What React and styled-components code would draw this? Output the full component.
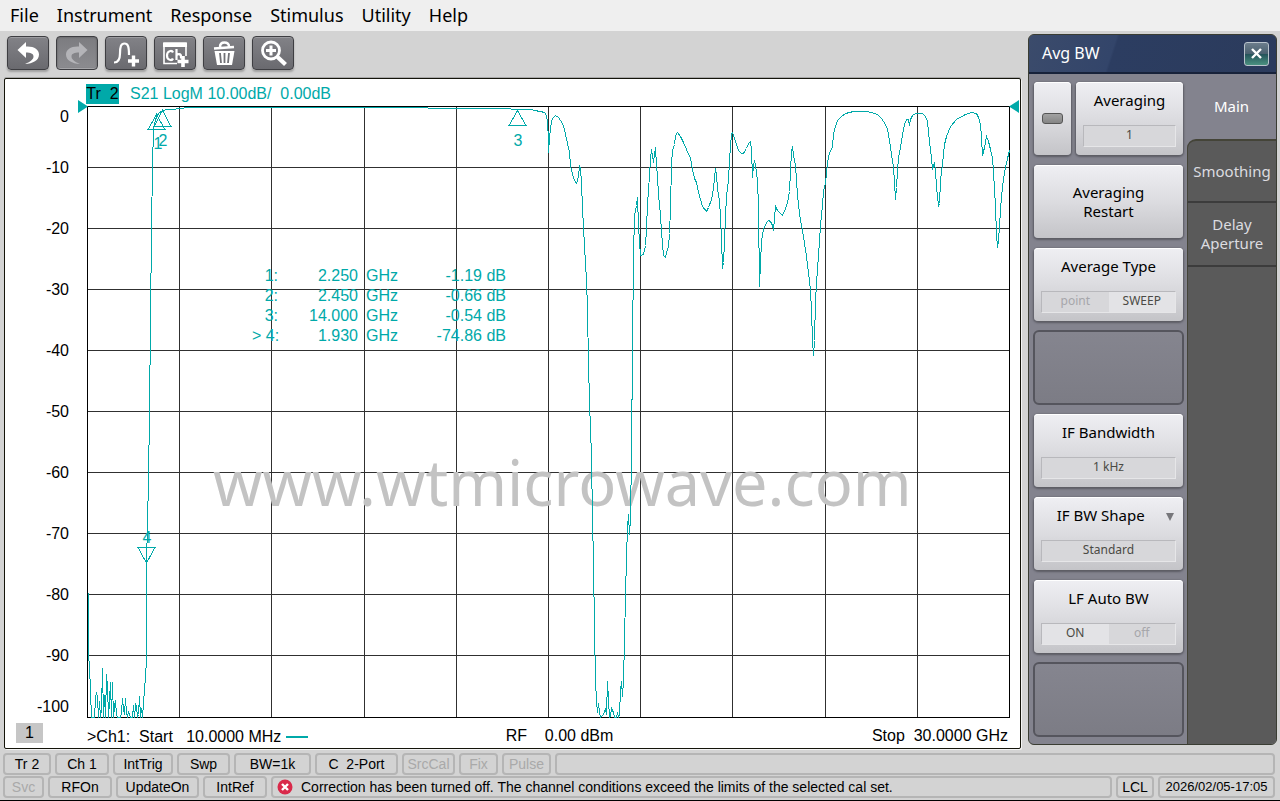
import React from "react";
import styled, { createGlobalStyle, css } from "styled-components";

const ui = `"Noto Sans", "Open Sans", sans-serif`;
const plain = `"Liberation Sans", Arial, sans-serif`;
const teal = "#00a9a9";

const GlobalStyle = createGlobalStyle`
  *, *::before, *::after { box-sizing: border-box; }
  body { margin: 0; background: #d3d3d3; font-family: ${plain}; color: #000; }
  button { font: inherit; color: inherit; margin: 0; padding: 0; border: 0; background: none; cursor: pointer; }
`;

const Page = styled.div`
  display: flex;
  flex-direction: column;
  min-height: 100vh;
  border-bottom: 1px solid #000;
`;

/* ---- menu ---- */
const MenuBar = styled.nav`
  display: flex;
  align-items: center;
  gap: 18px;
  height: 31px;
  padding: 0 10px 2px;
  background: #efefef;
`;
const MenuItem = styled.button`
  font-family: ${ui};
  font-size: 18px;
  line-height: 24px;
`;

/* ---- main area ---- */
const Main = styled.main`
  flex: 1;
  display: flex;
  gap: 7px;
  padding: 0 3px 2px 4px;
`;
const Workspace = styled.section`
  flex: 1;
  min-width: 0;
  display: flex;
  flex-direction: column;
`;
const Toolbar = styled.div`
  display: flex;
  gap: 7px;
  padding: 5px 3px 8px;
`;
const Tool = styled.button`
  width: 42px;
  height: 34px;
  display: grid;
  place-items: center;
  border: 1px solid #3e3e42;
  border-radius: 4px;
  color: #fff;
  background: linear-gradient(#828287, #6a6a6f);
  box-shadow: inset 0 1px 0 #9c9ca0, 0 2px 2px #a0a0a0;
  &:disabled {
    color: #b4b4b8;
    background: linear-gradient(#7c7c80, #8c8c90);
    box-shadow: inset 0 0 2px #555, inset 0 -1px 0 #c4c4c8;
  }
  svg { display: block; }
`;

const ChartWindow = styled.div`
  flex: 1;
  display: grid;
  grid-template-columns: 82px minmax(0, 1fr) 10px;
  grid-template-rows: 27px minmax(400px, 1fr) 30px;
  border: 1px solid #14140a;
  border-radius: 2px;
  background: #fff;
  box-shadow: 0 -1px 0 #a8a8a8, 1px 1px 0 #f4f4f4;
  font-size: 16px;
  line-height: 20px;
`;
const TraceHeader = styled.div`
  grid-column: 2;
  display: flex;
  align-items: center;
  gap: 11px;
  padding-top: 3px;
  color: ${teal};
  white-space: pre;
`;
const TraceBadge = styled.span`
  margin-left: -1px;
  width: 33px;
  text-align: center;
  background: ${teal};
  color: #000;
`;
const Scale = styled.div`
  grid-row: 2;
  grid-column: 1;
  display: grid;
  grid-template-rows: 1fr repeat(9, 2fr) 1fr;
  padding: 1px 18px 1px 0;
  text-align: right;
`;
const ScaleLabel = styled.span`
  align-self: ${(p) => p.$align || "center"};
`;
const Plot = styled.div`
  grid-row: 2;
  grid-column: 2;
  position: relative;
  color: ${teal};
`;
const Layer = styled.svg`
  position: absolute;
  inset: 0;
  width: 100%;
  height: 100%;
  overflow: visible;
  path, polyline, polygon { vector-effect: non-scaling-stroke; }
`;
const Watermark = styled.div`
  position: absolute;
  top: 61.5%;
  left: 51.5%;
  transform: translate(-50%, -50%);
  font-family: ${ui};
  font-size: 63px;
  line-height: 80px;
  color: #c3c3c3;
`;
const MarkerLabel = styled.span`
  position: absolute;
  left: ${(p) => p.$x}%;
  top: ${(p) => p.$y}%;
  transform: translate(-50%, -50%);
`;
const Readout = styled.table`
  position: absolute;
  left: 165px;
  top: 160px;
  width: 254px;
  border-collapse: collapse;
  table-layout: fixed;
  td, th { padding: 0; height: 20px; font-weight: 400; text-align: right; white-space: pre; }
  col:nth-child(1) { width: 26px; }
  col:nth-child(2) { width: 80px; }
  col:nth-child(3) { width: 40px; }
`;
const WindowNumber = styled.div`
  grid-row: 3;
  grid-column: 1;
  width: 27px;
  margin: 5px 0 0 11px;
  height: 20px;
  text-align: center;
  background: #c6c6c6;
`;
const Sweep = styled.div`
  grid-row: 3;
  grid-column: 2;
  display: grid;
  grid-template-columns: 1fr auto 1fr;
  padding: 8px 2px 0 0;
  white-space: pre;
  & > :nth-child(2) { padding-left: 24px; }
  & > :nth-child(3) { text-align: right; }
`;
const StartText = styled.span`
  display: flex;
  align-items: center;
  gap: 5px;
  &::after { content: ""; width: 22px; height: 2px; background: ${teal}; }
`;

/* ---- side panel ---- */
const Panel = styled.aside`
  flex: 0 0 249px;
  display: flex;
  flex-direction: column;
  margin: 3px 0 4px;
  border: 1px solid #3a3d33;
  border-radius: 6px;
  overflow: hidden;
  background: #5a5a5a;
  font-family: ${ui};
  font-size: 15px;
  line-height: 19px;
`;
const PanelHeader = styled.header`
  height: 39px;
  display: flex;
  align-items: center;
  justify-content: space-between;
  padding: 0 7px 0 13px;
  border-bottom: 2px solid #17223a;
  color: #fff;
  background: linear-gradient(108deg, #3b4b6b 0%, #33456a 34%, #2c3d61 35%, #2b3b5c 100%);
`;
const PanelTitle = styled.h2`
  margin: 0;
  font-size: 16px;
  font-weight: 400;
`;
const Close = styled.button`
  width: 25px;
  height: 24px;
  display: grid;
  place-items: center;
  border: 1px solid #b9c3cc;
  border-radius: 3px;
  background: linear-gradient(#6c7d8c 0%, #4b6170 48%, #24525a 50%, #4a9180 100%);
`;
const PanelBody = styled.div`
  flex: 1;
  display: flex;
  background: #83838e;
`;
const Keys = styled.div`
  flex: 1;
  display: grid;
  grid-template-rows: repeat(8, minmax(66px, 1fr));
  gap: 10px;
  padding: 8px 4px 8px 5px;
`;
const KeyPair = styled.div`
  display: grid;
  grid-template-columns: 37px 1fr;
  gap: 5px;
`;
const Key = styled.button`
  position: relative;
  display: flex;
  flex-direction: column;
  align-items: center;
  justify-content: ${(p) => (p.$centred ? "center" : "space-between")};
  padding: ${(p) => (p.$centred ? "0" : "9px 7px 8px")};
  border-radius: 4px;
  background: linear-gradient(#efeff3, #dcdce0 50%, #c4c4c8);
  box-shadow: inset 0 1px 0 #fff, 0 1px 2px 1px #5c5c64;
`;
const EmptyKey = styled.div`
  margin: -1px;
  border: 2px solid #55555d;
  border-radius: 6px;
  background: linear-gradient(#85858f, #7c7c85);
`;
const Lamp = styled.span`
  width: 21px;
  height: 11px;
  border: 1px solid #555;
  border-radius: 3px;
  background: linear-gradient(#a2a2a2, #858585);
`;
const Field = styled.span`
  display: flex;
  width: 100%;
  height: 22px;
  border: 1px solid;
  border-color: #b8b8bc #e6e6e8 #e6e6e8 #b8b8bc;
  background: #d7d7da;
  font-size: 12px;
  line-height: 18px;
  color: #4a4a44;
`;
const Choice = styled.span`
  flex: 1;
  text-align: center;
  ${(p) => p.$on && css`background: #e3e3e6;`}
  ${(p) => p.$off && css`color: #a6a6aa;`}
`;
const Caret = styled.span`
  position: absolute;
  right: 9px;
  top: 16px;
  border: 4px solid transparent;
  border-top: 8px solid #77777b;
  border-bottom: 0;
`;
const Tabs = styled.div`
  flex: 0 0 89px;
  display: flex;
  flex-direction: column;
`;
const Tab = styled.button`
  height: 64px;
  color: #dcdce0;
  background: #5a5a5a;
  border-left: 1px solid #444438;
  border-bottom: 2px solid #3c3c3c;
  ${(p) => p.$active && css`
    height: 65px;
    color: #fff;
    background: none;
    border: 0;
  `}
  ${(p) => p.$first && css`
    border-top: 2px solid #444438;
    border-top-left-radius: 9px;
  `}
`;
const TabFill = styled.div`
  flex: 1;
  border-left: 1px solid #444438;
  background: #5a5a5a;
`;

/* ---- status bar ---- */
const Status = styled.footer`
  display: flex;
  flex-direction: column;
  gap: 1px;
  padding: 2px 5px 2px 3px;
  font-size: 14px;
  line-height: 18px;
`;
const StatusRow = styled.div`
  display: flex;
  gap: 4px;
`;
const Cell = styled.div`
  height: 22px;
  flex: ${(p) => (p.$w ? `0 0 ${p.$w}px` : "1")};
  min-width: 0;
  display: flex;
  align-items: center;
  justify-content: ${(p) => (p.$w ? "center" : "flex-start")};
  gap: 8px;
  padding: 0 ${(p) => (p.$w ? 0 : 4)}px;
  border: 2px solid #b5b5b5;
  border-radius: 4px;
  white-space: pre;
  font-size: ${(p) => (p.$small ? 13 : 14)}px;
  color: ${(p) => (p.$dim ? "#a9a9a9" : "#000")};
`;

const W = 923;
const H = 612;
const OX = 87;
const OY = 106;

const trace = `88,592 88,655 89,665 90,692 91,717 94,717 95,698 96,692 97,697 98,717 99,701 100,717 101,709 102,668
103,717 104,695 105,717 106,674 107,686 108,717 109,700 110,682 111,717 112,682 113,717 114,706 115,700 116,714 117,717 120,717
121,712 122,698 123,708 124,714 125,698 126,712 127,717 128,711 130,717 132,717 133,705 134,717 135,704 136,706 137,717 138,714 139,696
140,717 141,708 142,717 143,702 144,690 145,676 146,660 146,564 148,480 149,412 150,320 151,228 152,167 153,128 155,119 158,113 162,110
168,109 183,108 184,107 427,107 428,108 510,108 511,109 531,109 534,110 540,111 544,112 546,115 547,122 548,138 548,152 549,137 551,121 552,118
555,115 558,117 560,120 563,125 565,134 567,143 569,152 570,165 572,174 574,180 576,183 578,176 579,165 580,168 581,182 582,208
583,226 584,246 585,262 586,280 587,309 588,364 589,400 590,430 591,455 592,520 593,560 594,630 595,680 596,700 597,712 598,703
599,711 600,717 601,716 603,714 605,708 606,714 607,681 608,700 609,717 610,716 611,708 613,712 614,717 616,717 617,712 618,717
619,713 620,690 621,681 622,696 623,680 624,640 625,596 626,556 627,528 628,514 629,534 630,517 631,455 632,346 633,256 634,215
636,205 637,197 638,225 639,242 640,255 643,254 645,245 646,228 647,204 649,175 650,158 651,149 652,155 653,162 654,154 655,147 656,165
657,176 658,194 660,215 661,231 662,243 663,255 665,257 666,252 668,246 669,233 670,208 671,164 672,150 674,144 675,135 677,132
680,136 683,142 686,149 690,158 692,169 694,178 696,182 698,192 700,199 702,206 706,211 708,207 711,199 713,188 714,177 715,168
716,175 717,188 719,200 720,216 721,239 722,268 723,262 724,241 725,215 726,196 728,180 729,160 730,146 731,133 732,132 734,138
736,144 738,150 741,153 743,153 746,148 748,143 750,141 751,150 752,177 753,165 754,160 755,164 757,180 758,207 759,286 760,262
761,241 763,229 766,222 768,220 770,221 772,225 773,230 774,217 775,206 777,210 782,215 785,208 787,202 789,191 790,170 791,152
792,146 793,155 795,165 796,180 797,194 798,205 800,220 802,230 804,243 806,256 808,272 810,290 811,310 812,340 813,355 814,340
815,300 816,283 818,255 820,225 822,205 823,190 825,183 826,172 828,156 830,150 832,147 833,133 835,126 837,120 841,116 845,113
853,111 866,111 871,112 877,114 881,118 885,124 887,129 889,140 891,154 893,167 894,182 895,199 896,187 897,170 898,157 900,147
902,134 904,124 906,119 908,119 909,125 910,119 912,115 915,113 922,113 925,116 927,121 929,141 931,158 932,169 934,162 935,170
936,187 938,205 939,203 940,180 942,163 944,144 946,136 950,126 956,119 965,114 971,112 976,113 978,117 980,124 981,137 982,155
984,147 986,136 988,141 990,149 992,157 993,172 994,188 995,207 996,233 997,247 998,240 999,225 1000,210 1001,196 1003,178 1005,167
1007,158 1009,150`
  .trim()
  .split(/\s+/)
  .map((pair) => {
    const [x, y] = pair.split(",").map(Number);
    return `${x - OX + 0.5},${y - OY + 0.5}`;
  })
  .join(" ");

const gridX = [92, 184, 277, 369, 461, 553, 645, 738, 830];
const gridY = [61, 122, 183, 244, 305, 366, 427, 488, 549];

const grid = gridX.map((x) => `M${x}.5 0V${H}`).join("") + gridY.map((y) => `M0 ${y}.5H${W}`).join("");

const scale = [0, -10, -20, -30, -40, -50, -60, -70, -80, -90, -100];

const markers = [
  { n: 1, x: 71, y: 38 },
  { n: 2, x: 76, y: 35 },
  { n: 3, x: 431, y: 35 },
  { n: 4, x: 60, y: 432 },
];

const readings = [
  ["1:", "2.250", "-1.19 dB"],
  ["2:", "2.450", "-0.66 dB"],
  ["3:", "14.000", "-0.54 dB"],
  ["> 4:", "1.930", "-74.86 dB"],
];

const icons = {
  Undo: (
    <svg width="26" height="26" viewBox="0 0 26 26" fill="currentColor">
      <path d="M2.500 10 11 2v4.500c8-.5 13 3 13 8 0 6-6 9-14 9.500 6-2.500 8.500-5 8.500-7.500 0-3-3-4-7.500-4V18z" />
    </svg>
  ),
  Redo: (
    <svg width="26" height="26" viewBox="0 0 26 26" fill="currentColor">
      <path d="M23.500 10 15 2v4.500C7 6 2 9.500 2 14.500c0 6 6 9 14 9.500-6-2.500-8.500-5-8.500-7.500 0-3 3-4 7.500-4V18z" />
    </svg>
  ),
  "Add trace": (
    <svg width="30" height="28" viewBox="0 0 30 28" fill="none" stroke="currentColor">
      <path d="M3 23.500c4 0 6-3 6-9 0-7 1-10 4.500-10S18 7.500 18 16" strokeWidth="2.200" />
      <path d="M22.500 16.500v11M17 22h11" strokeWidth="3.400" />
    </svg>
  ),
  "Add channel": (
    <svg width="30" height="28" viewBox="0 0 30 28" fill="none" stroke="currentColor">
      <path d="M17 24.500H4V4h22v13" strokeWidth="1.600" />
      <path d="M3 6h24" strokeWidth="4" />
      <path d="M13 13.500c-1-2.500-6-2-6 3s5 5.500 6 3M16.500 10v11M16.500 16.500c1-2 4.500-2 4.500 1v2" strokeWidth="2.200" />
      <path d="M23 17v11M17.500 22.500h11" strokeWidth="3.600" />
    </svg>
  ),
  Delete: (
    <svg width="26" height="28" viewBox="0 0 26 28" fill="none" stroke="currentColor">
      <path d="M3 9.500 23 8M9 8c0-3 2-4.500 4.500-4.500S18 5 18 7.500" strokeWidth="2.500" />
      <path d="M3.500 12h20l-2.500 14H6z" fill="currentColor" stroke="none" />
      <path d="m9 14 1 10M13.500 14v10M18 14l-1 10" stroke="#707075" strokeWidth="1.800" />
    </svg>
  ),
  Zoom: (
    <svg width="28" height="28" viewBox="0 0 28 28" fill="none" stroke="currentColor">
      <circle cx="12" cy="11.500" r="8.500" strokeWidth="2.800" />
      <path d="M12 6.500v10M7 11.500h10" strokeWidth="3" />
      <path d="m18.500 18 8 7.500" strokeWidth="4.200" />
    </svg>
  ),
};

function Chart() {
  return (
    <ChartWindow>
      <TraceHeader>
        <TraceBadge>Tr  2</TraceBadge>
        <span>S21 LogM 10.00dB/  0.00dB</span>
      </TraceHeader>
      <Scale>
        {scale.map((v) => (
          <ScaleLabel key={v} $align={v === 0 ? "start" : v === -100 ? "end" : undefined}>{v}</ScaleLabel>
        ))}
      </Scale>
      <Plot>
        <Layer viewBox={`0 0 ${W} ${H}`} preserveAspectRatio="none" shapeRendering="crispEdges" aria-hidden="true">
          <path d={grid} stroke="#303030" fill="none" />
          <path d="M.5 .5H922.500V611.500H.5z" stroke="#000" fill="none" />
        </Layer>
        <Watermark>www.wtmicrowave.com</Watermark>
        <Layer viewBox={`0 0 ${W} ${H}`} preserveAspectRatio="none" role="img" aria-label="S21 trace">
          <polyline points={trace} stroke={teal} fill="none" shapeRendering="crispEdges" />
          <g stroke={teal} fill="none" shapeRendering="crispEdges">
            <polygon points="69.500,8.500 61,23.500 78,23.500" />
            <polygon points="75.500,4.500 67,20.500 84,20.500" />
            <polygon points="430.500,4.500 422,19.500 439,19.500" />
            <polygon points="59.500,457 51,441.500 68,441.500" />
          </g>
          <path d="M-9-6 1 .5-9 7zM932-6 922 .5 932 7z" fill={teal} />
        </Layer>
        {markers.map((m) => (
          <MarkerLabel key={m.n} $x={(m.x / W) * 100} $y={(m.y / H) * 100}>{m.n}</MarkerLabel>
        ))}
        <Readout>
          <colgroup><col /><col /><col /><col /></colgroup>
          <tbody>
            {readings.map(([n, f, v]) => (
              <tr key={n}>
                <th scope="row">{n}</th>
                <td>{f}</td>
                <td>GHz</td>
                <td>{v}</td>
              </tr>
            ))}
          </tbody>
        </Readout>
      </Plot>
      <WindowNumber>1</WindowNumber>
      <Sweep>
        <StartText>{">Ch1:  Start   10.0000 MHz"}</StartText>
        <span>RF    0.00 dBm</span>
        <span>Stop  30.0000 GHz</span>
      </Sweep>
    </ChartWindow>
  );
}

function SidePanel() {
  return (
    <Panel>
      <PanelHeader>
        <PanelTitle>Avg BW</PanelTitle>
        <Close aria-label="Close">
          <svg width="11" height="11" viewBox="0 0 11 11" stroke="#fff" strokeWidth="2.400">
            <path d="m1 1 9 9M10 1l-9 9" />
          </svg>
        </Close>
      </PanelHeader>
      <PanelBody>
        <Keys>
          <KeyPair>
            <Key $centred aria-label="Averaging on or off"><Lamp /></Key>
            <Key>Averaging<Field><Choice>1</Choice></Field></Key>
          </KeyPair>
          <Key $centred>Averaging<br />Restart</Key>
          <Key>Average Type<Field><Choice $off>point</Choice><Choice $on>SWEEP</Choice></Field></Key>
          <EmptyKey />
          <Key>IF Bandwidth<Field><Choice>1 kHz</Choice></Field></Key>
          <Key><span>IF BW Shape&nbsp;&nbsp;&nbsp;&nbsp;</span><Caret /><Field><Choice>Standard</Choice></Field></Key>
          <Key>LF Auto BW<Field><Choice $on>ON</Choice><Choice $off>off</Choice></Field></Key>
          <EmptyKey />
        </Keys>
        <Tabs>
          <Tab $active>Main</Tab>
          <Tab $first>Smoothing</Tab>
          <Tab>Delay<br />Aperture</Tab>
          <TabFill />
        </Tabs>
      </PanelBody>
    </Panel>
  );
}

export default function App() {
  return (
    <Page>
      <GlobalStyle />
      <MenuBar>
        {["File", "Instrument", "Response", "Stimulus", "Utility", "Help"].map((m) => (
          <MenuItem key={m}>{m}</MenuItem>
        ))}
      </MenuBar>
      <Main>
        <Workspace>
          <Toolbar>
            {Object.entries(icons).map(([name, icon]) => (
              <Tool key={name} aria-label={name} disabled={name === "Redo"}>{icon}</Tool>
            ))}
          </Toolbar>
          <Chart />
        </Workspace>
        <SidePanel />
      </Main>
      <Status>
        <StatusRow>
          <Cell $w={48}>Tr 2</Cell>
          <Cell $w={54}>Ch 1</Cell>
          <Cell $w={60}>IntTrig</Cell>
          <Cell $w={53}>Swp</Cell>
          <Cell $w={77}>BW=1k</Cell>
          <Cell $w={83}>C  2-Port</Cell>
          <Cell $w={53} $dim>SrcCal</Cell>
          <Cell $w={39} $dim>Fix</Cell>
          <Cell $w={49} $dim>Pulse</Cell>
          <Cell />
        </StatusRow>
        <StatusRow>
          <Cell $w={41} $dim>Svc</Cell>
          <Cell $w={64}>RFOn</Cell>
          <Cell $w={83}>UpdateOn</Cell>
          <Cell $w={64}>IntRef</Cell>
          <Cell>
            <svg width="16" height="16" viewBox="0 0 16 16" aria-label="Error" role="img">
              <circle cx="8" cy="8" r="7.500" fill="#d9294a" />
              <path d="m5 5 6 6M11 5l-6 6" stroke="#fff" strokeWidth="2.400" />
            </svg>
            Correction has been turned off. The channel conditions exceed the limits of the selected cal set.
          </Cell>
          <Cell $w={38}>LCL</Cell>
          <Cell $w={117} $small>2026/02/05-17:05</Cell>
        </StatusRow>
      </Status>
    </Page>
  );
}
